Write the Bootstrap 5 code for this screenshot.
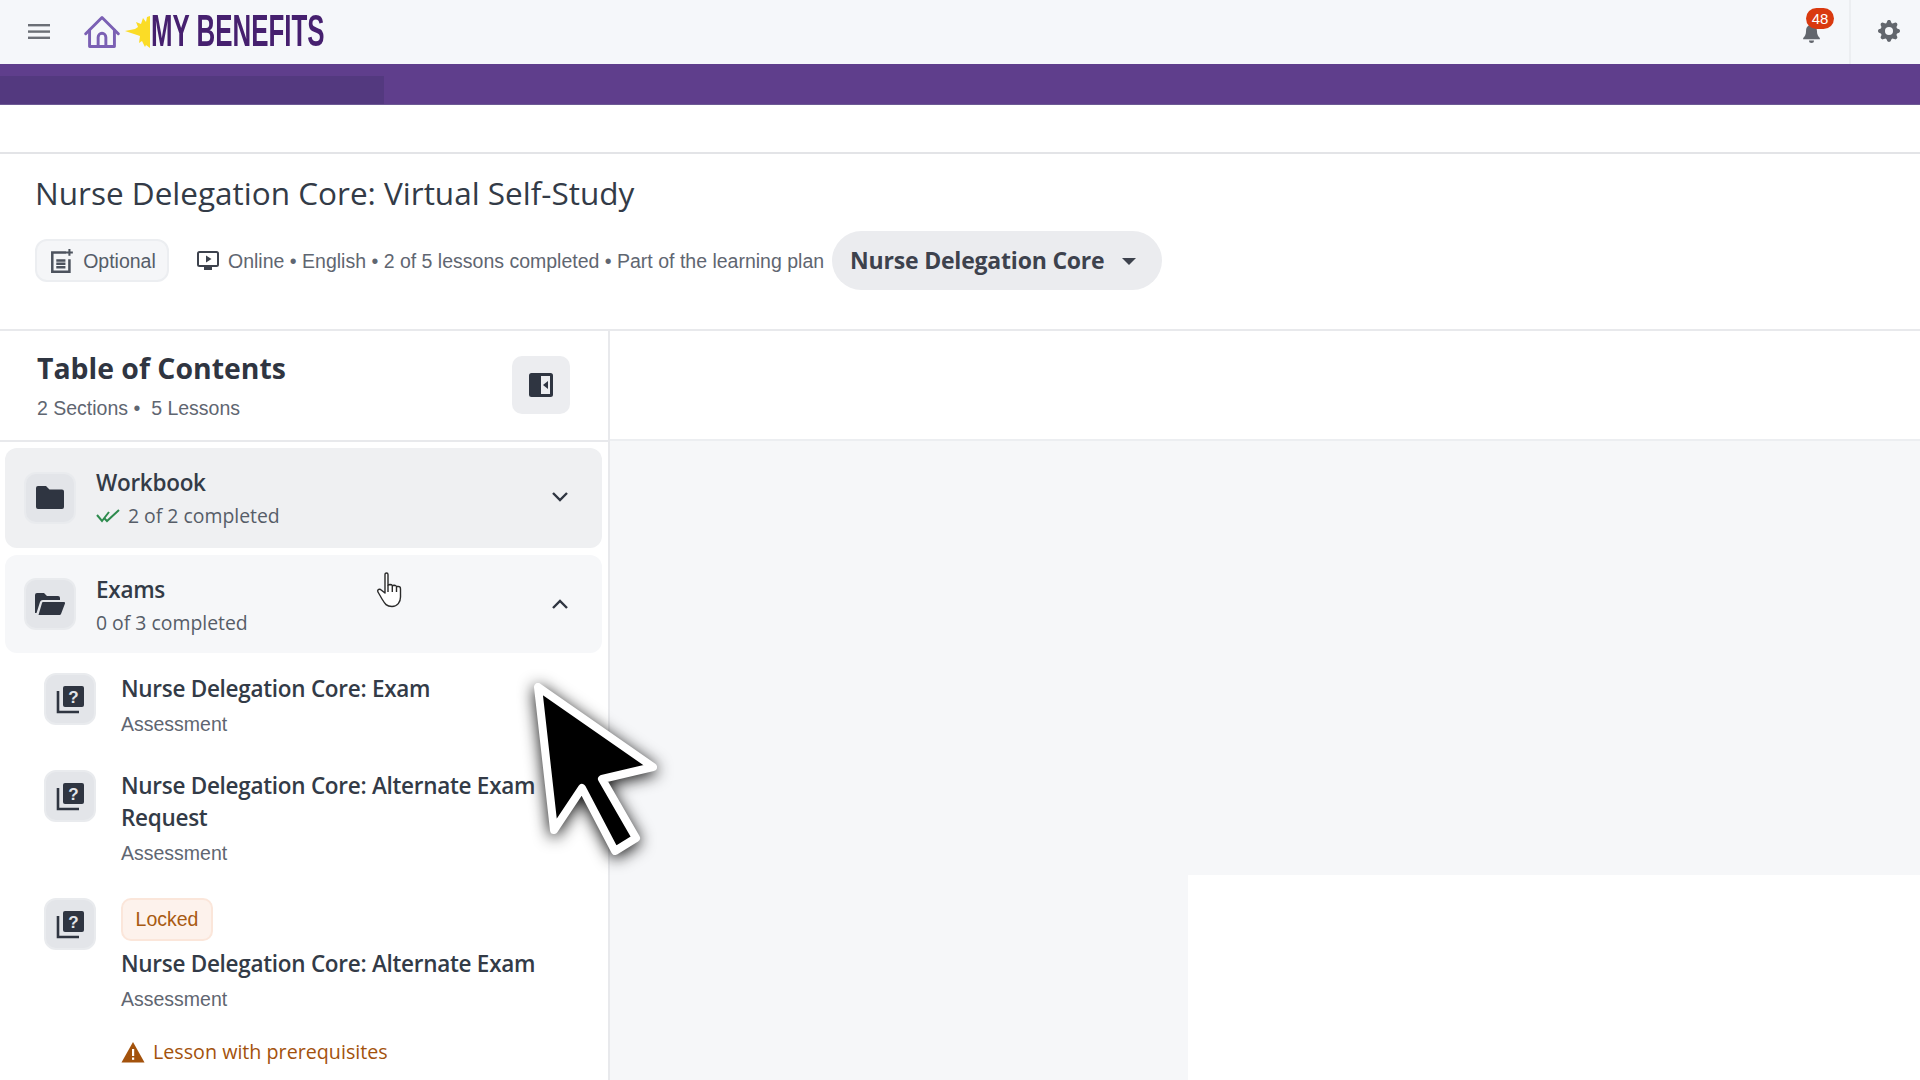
<!DOCTYPE html>
<html lang="en">
<head>
<meta charset="utf-8">
<title>My Benefits</title>
<link href="https://cdn.jsdelivr.net/npm/bootstrap@5.3.0/dist/css/bootstrap.min.css" rel="stylesheet">
<style>
html,body{height:1080px;overflow:hidden}
body{font-family:"Liberation Sans",Arial,sans-serif;color:#2f3541;background:#fff;position:relative}
.os{font-family:"Open Sans","Noto Sans",sans-serif}
.topbar{height:64px;background:#f5f7fa}
.burger{width:78px}
.logo-txt-wrap{width:175px;height:64px;margin-left:1px}
.logo-txt{font-family:"Liberation Sans Narrow","Liberation Sans",sans-serif;font-weight:700;font-size:44px;line-height:62px;color:#46206f;transform:scaleX(.588);transform-origin:left center;white-space:nowrap;display:inline-block}
.house{margin-left:6px}
.sun{margin-left:5px}
.bell-zone{width:74px;height:64px}
.bell-svg{margin-top:2px;margin-left:-1px}
.bell-badge{position:absolute;top:8px;left:31px;background:#d9390f;color:#fff;font-size:15px;line-height:21px;height:21px;width:28px;border-radius:11px;text-align:center}
.gear-zone{width:71px;height:64px;border-left:2px solid #eceef1;padding-left:6px;padding-bottom:3px}
.purple{height:41px;background:#5f3e8c;border-bottom:1px solid #6d5a94;padding-top:12px}
.purple-inner{width:384px;height:28px;background:#53397f}
.spacer{height:49px;border-bottom:2px solid #e3e4e7}
.head{height:177px;padding:0 35px;border-bottom:2px solid #e8e9ec}
.page-title{font-size:31.5px;font-weight:400;color:#333b47;line-height:44px;margin:0;padding-top:17px;height:77px}
.meta-row{color:#5f6671;font-size:19.5px;height:59px}
.meta-row span:not(.caret-s){padding-top:2px}
.opt-pill{height:43px;width:134px;border:2px solid #eceef1;background:#f5f6f8;border-radius:12px;color:#565d68;gap:9px;padding-left:2px}
.meta-txt{margin-left:28px;gap:9px}
.plan-pill{height:59px;width:330px;margin-left:8px;background:#ebecef;border-radius:30px;padding-left:18px;color:#3d424d;font-size:23px;font-weight:700;letter-spacing:-.2px}
.caret-s{width:0;height:0;border-left:7px solid transparent;border-right:7px solid transparent;border-top:7px solid #3d424d;margin-left:17px;margin-top:2px}
.body-row{height:749px}
.toc{width:610px;border-right:2px solid #e8e9ec;flex:none}
.toc-head{height:111px;padding:18px 38px 0 37px;border-bottom:2px solid #e8e9ec}
.toc-title{font-size:28.4px;font-weight:700;color:#2f3541;line-height:38px;margin:0}
.toc-sub{font-size:19.5px;color:#5f6671;line-height:26px;margin-top:8px}
.toggle-btn{width:58px;height:58px;background:#ecedf0;border-radius:10px;margin-top:7px}
.sec{margin:6px 6px 0 5px;border-radius:12px;padding:0 33px 0 19px;height:100px;gap:20px}
.sec-a{background:#eff0f2}
.sec-a .sec-text{padding-top:4px}
.sec-a .chev{margin-bottom:2px}
.sec-a .ico-box{margin-bottom:1px}
.sec-b{background:#f6f7f9;margin-top:7px;height:98px}
.sec-b .sec-text{padding-top:6px}
.ico-box{width:52px;height:52px;background:#e3e5e9;border:2px solid #e9ebee;border-radius:12px;flex:none}
.sec-name{font-size:22.5px;letter-spacing:-.28px;font-weight:600;color:#333b47;line-height:32px}
.sec-sub{font-size:19.4px;color:#565d68;line-height:34px}
.lesson{padding-left:44px;gap:25px}
.les-name{font-size:22.5px;letter-spacing:-.28px;font-weight:600;color:#333b47;line-height:32px}
.les-type{font-size:19.5px;color:#5f6671;line-height:26px;margin-top:6px}
.locked{width:92px;height:43px;border:2px solid #fbe6da;background:#fdf2ec;color:#a85a12;border-radius:10px;font-size:19.5px;margin-bottom:7px}
.warn{color:#a3520c;font-size:19.7px;line-height:28px;gap:8px;margin-top:26px}
.right-col{flex:1}
.right-top{height:111px;border-bottom:2px solid #eceef1}
.gray-l{width:578px;height:639px;background:#f6f7f9}
.gray-r{flex:1;height:434px;background:#f6f7f9}
.hand{position:absolute;left:376px;top:572px}
.arrow{position:absolute;left:525px;top:672px;filter:drop-shadow(0 3px 8px rgba(0,0,0,.95))}
.lesson-first{margin-top:20px}
.lesson-second{margin-top:33px}
.lesson-third{margin-top:32px}
.qbox{overflow:hidden}
.qbox svg{display:block}
</style>
</head>
<body>
<header class="topbar d-flex align-items-center">
  <div class="burger d-flex justify-content-center align-items-center flex-shrink-0">
    <svg width="24" height="16" viewBox="0 0 24 16"><g fill="#6b6f76"><rect x="1" y="0" width="22" height="2.4"/><rect x="1" y="6.4" width="22" height="2.4"/><rect x="1" y="12.6" width="22" height="2.4"/></g></svg>
  </div>
  <svg class="house" width="36" height="34" viewBox="0 0 42 38" fill="none" stroke="#7b60b4" stroke-width="3.4" stroke-linejoin="round" stroke-linecap="round"><path d="M2 21 21 2l19 19"/><path d="M6.500 17v19h29V17"/><path d="M16.500 36V25a4.500 4.500 0 0 1 9 0v11"/></svg>
  <svg class="sun" width="25" height="32" viewBox="0 0 25 32"><path fill="#fbdc26" d="M25 0V32L21 29 20 31 17 25 14 27 15 20 9 18 0 15 10 13 13 11 11 6 16 8 18 2 21 6 22 1z"/></svg>
  <div class="logo-txt-wrap"><span class="logo-txt">MY BENEFITS</span></div>
  <div class="ms-auto bell-zone position-relative d-flex align-items-center justify-content-center">
    <svg class="bell-svg" width="19" height="20" viewBox="0 0 22 24"><path fill="#62666d" d="M11 2c-4 0-6.500 3-6.500 7 0 5-1.500 7-3.500 9v1.500h20V18c-2-2-3.500-4-3.500-9 0-4-2.500-7-6.500-7zM8 21h6a3 3 0 0 1-6 0z"/></svg>
    <span class="bell-badge">48</span>
  </div>
  <div class="gear-zone d-flex align-items-center justify-content-center">
    <svg width="22" height="22" viewBox="0 0 16 16"><path fill="#62666d" d="M9.405 1.05c-.413-1.400-2.397-1.400-2.810 0l-.1.340a1.464 1.464 0 0 1-2.105.872l-.31-.17c-1.283-.698-2.686.705-1.987 1.987l.169.311c.446.820.023 1.841-.872 2.105l-.34.100c-1.400.413-1.400 2.397 0 2.810l.34.100a1.464 1.464 0 0 1 .872 2.105l-.17.310c-.698 1.283.705 2.686 1.987 1.987l.311-.169a1.464 1.464 0 0 1 2.105.872l.1.340c.413 1.400 2.397 1.400 2.810 0l.1-.340a1.464 1.464 0 0 1 2.105-.872l.31.170c1.283.698 2.686-.705 1.987-1.987l-.169-.311a1.464 1.464 0 0 1 .872-2.105l.34-.100c1.400-.413 1.400-2.397 0-2.810l-.34-.100a1.464 1.464 0 0 1-.872-2.105l.17-.310c.698-1.283-.705-2.686-1.987-1.987l-.311.169a1.464 1.464 0 0 1-2.105-.872l-.1-.340zM8 10.930a2.929 2.929 0 1 1 0-5.860 2.929 2.929 0 0 1 0 5.858z"/></svg>
  </div>
</header>
<div class="purple"><div class="purple-inner"></div></div>
<div class="spacer"></div>
<section class="head">
  <h1 class="page-title os">Nurse Delegation Core: Virtual Self-Study</h1>
  <div class="meta-row d-flex align-items-center">
    <div class="opt-pill d-flex align-items-center justify-content-center">
      <svg width="24" height="24" viewBox="0 0 21 21" fill="none" stroke="#4d535e" stroke-width="2.200"><path d="M14 3H2v17h15V9"/><path d="M5.500 10h8M5.500 13h8M5.500 16h8"/><path d="M17 0v6M14 3h6" stroke-width="1.800"/></svg>
      <span>Optional</span>
    </div>
    <div class="meta-txt d-flex align-items-center">
      <svg width="22" height="20" viewBox="0 0 22 20" fill="none"><rect x="1" y="1" width="20" height="14" rx="1.500" stroke="#3d424d" stroke-width="2"/><path d="M9 4.500v7l5.500-3.500z" fill="#3d424d"/><rect x="7" y="16" width="8" height="3" fill="#3d424d"/></svg>
      <span>Online • English • 2 of 5 lessons completed • Part of the learning plan</span>
    </div>
    <div class="plan-pill os d-flex align-items-center">Nurse Delegation Core<span class="caret-s"></span></div>
  </div>
</section>
<main class="body-row d-flex">
  <aside class="toc">
    <div class="toc-head d-flex justify-content-between">
      <div>
        <h2 class="toc-title os">Table of Contents</h2>
        <div class="toc-sub">2 Sections •&nbsp; 5 Lessons</div>
      </div>
      <div class="toggle-btn d-flex align-items-center justify-content-center">
        <svg width="24" height="24" viewBox="0 0 24 24"><rect width="24" height="24" rx="2.500" fill="#2f3541"/><rect x="12" y="3" width="9" height="18" fill="#ecedf0"/><path fill="#2f3541" d="M19 8v8l-5-4z"/></svg>
      </div>
    </div>
    <div class="sec sec-a d-flex align-items-center">
      <div class="ico-box d-flex align-items-center justify-content-center">
        <svg width="28" height="23" viewBox="0 0 28 23"><path fill="#2f3541" d="M2 0h8l3.500 3.500H26a2 2 0 0 1 2 2V21a2 2 0 0 1-2 2H2a2 2 0 0 1-2-2V2a2 2 0 0 1 2-2z"/></svg>
      </div>
      <div class="sec-text flex-grow-1 os">
        <div class="sec-name">Workbook</div>
        <div class="sec-sub d-flex align-items-center gap-2">
          <svg width="24" height="14" viewBox="0 0 24 14" fill="none" stroke="#2e8b4e" stroke-width="2"><path d="M1 6l5 6L13 3"/><path d="M8 9l3 3L23 1"/></svg>
          <span>2 of 2 completed</span>
        </div>
      </div>
      <svg class="chev" width="18" height="12" viewBox="0 0 18 12" fill="none" stroke="#2f3541" stroke-width="2.400"><path d="M2 2l7 7 7-7"/></svg>
    </div>
    <div class="sec sec-b d-flex align-items-center">
      <div class="ico-box d-flex align-items-center justify-content-center">
        <svg width="30" height="22" viewBox="0 0 30 22"><path fill="#2f3541" d="M0 2a2 2 0 0 1 2-2h7l3 3h11a2 2 0 0 1 2 2v2H8a3 3 0 0 0-3 2L1.500 20H0z"/><path fill="#2f3541" d="M8 9h21a1 1 0 0 1 1 1.500L26 21a2 2 0 0 1-2 1H3.500L7 10a1.500 1.500 0 0 1 1-1z"/></svg>
      </div>
      <div class="sec-text flex-grow-1 os">
        <div class="sec-name">Exams</div>
        <div class="sec-sub">0 of 3 completed</div>
      </div>
      <svg class="chev" width="18" height="12" viewBox="0 0 18 12" fill="none" stroke="#2f3541" stroke-width="2.400"><path d="M2 10l7-7 7 7"/></svg>
    </div>
    <div class="lesson d-flex lesson-first">
      <div class="ico-box qbox">
        <svg width="48" height="48" viewBox="0 0 48 48"><path d="M12 16v21h21" fill="none" stroke="#2f3541" stroke-width="2.600"/><rect x="17" y="11" width="21" height="21" rx="2" fill="#2f3541"/><text x="27.500" y="28" font-size="17" font-weight="700" fill="#e3e5e9" text-anchor="middle" font-family="Liberation Sans">?</text></svg>
      </div>
      <div>
        <div class="les-name os">Nurse Delegation Core: Exam</div>
        <div class="les-type">Assessment</div>
      </div>
    </div>
    <div class="lesson d-flex lesson-second">
      <div class="ico-box qbox">
        <svg width="48" height="48" viewBox="0 0 48 48"><path d="M12 16v21h21" fill="none" stroke="#2f3541" stroke-width="2.600"/><rect x="17" y="11" width="21" height="21" rx="2" fill="#2f3541"/><text x="27.500" y="28" font-size="17" font-weight="700" fill="#e3e5e9" text-anchor="middle" font-family="Liberation Sans">?</text></svg>
      </div>
      <div>
        <div class="les-name os">Nurse Delegation Core: Alternate Exam<br>Request</div>
        <div class="les-type">Assessment</div>
      </div>
    </div>
    <div class="lesson d-flex lesson-third">
      <div class="ico-box qbox">
        <svg width="48" height="48" viewBox="0 0 48 48"><path d="M12 16v21h21" fill="none" stroke="#2f3541" stroke-width="2.600"/><rect x="17" y="11" width="21" height="21" rx="2" fill="#2f3541"/><text x="27.500" y="28" font-size="17" font-weight="700" fill="#e3e5e9" text-anchor="middle" font-family="Liberation Sans">?</text></svg>
      </div>
      <div>
        <div class="locked d-flex align-items-center justify-content-center">Locked</div>
        <div class="les-name os">Nurse Delegation Core: Alternate Exam</div>
        <div class="les-type">Assessment</div>
        <div class="warn d-flex align-items-center os">
          <svg width="24" height="22" viewBox="0 0 24 22"><path fill="#a3520c" d="M12 1 23.500 21.500H.5z"/><rect x="11" y="8" width="2.200" height="7" fill="#fff"/><rect x="11" y="16.500" width="2.200" height="2.300" fill="#fff"/></svg>
          <span>Lesson with prerequisites</span>
        </div>
      </div>
    </div>
  </aside>
  <div class="right-col d-flex flex-column">
    <div class="right-top"></div>
    <div class="d-flex">
      <div class="gray-l"></div>
      <div class="gray-r"></div>
    </div>
  </div>
</main>
<svg class="hand" width="30" height="36" viewBox="0 0 30 36" fill="#fff" stroke="#2a2a2a" stroke-width="1.400" stroke-linejoin="round"><path d="M9 2.500c0-2 3-2 3 0V13l2-.5c1.500 0 2 .5 2.300 1l2.200-.2c1.200 0 1.700.7 2 1.200l1.800-.1c1.500 0 2.200 1.200 2.200 2.600V25c0 5-3 9.500-8.500 9.500S9 32 6 27l-4-7c-1-1.500.5-3.500 2.500-2.500L9 21z"/><path d="M12 13v7M16.300 13.500V20M20.500 15v5" fill="none"/></svg>
<svg class="arrow" width="150" height="200" viewBox="0 0 150 200"><path d="M13 15 29 158 57 116 90 179 111 166 77 107 128 95z" fill="#000" stroke="#fff" stroke-width="8" stroke-linejoin="round"/></svg>
</body>
</html>
